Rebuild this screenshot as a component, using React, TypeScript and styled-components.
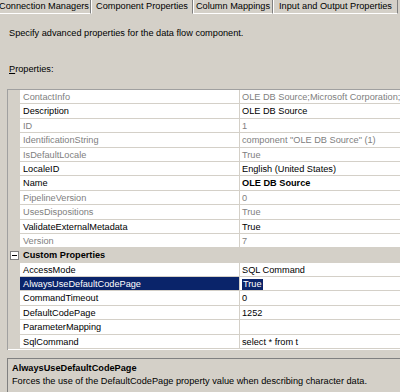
import React from "react";
import styled, { createGlobalStyle } from "styled-components";

interface GridProperty {
  name: string;
  value: string;
  readOnly?: boolean;
  bold?: boolean;
}

const tabs = [
  { label: "Connection Managers", width: 94 },
  { label: "Component Properties", width: 102, active: true },
  { label: "Column Mappings", width: 80 },
  { label: "Input and Output Properties", width: 125 },
];

const commonProperties: GridProperty[] = [
  { name: "ContactInfo", value: "OLE DB Source;Microsoft Corporation;", readOnly: true },
  { name: "Description", value: "OLE DB Source" },
  { name: "ID", value: "1", readOnly: true },
  { name: "IdentificationString", value: 'component "OLE DB Source" (1)', readOnly: true },
  { name: "IsDefaultLocale", value: "True", readOnly: true },
  { name: "LocaleID", value: "English (United States)" },
  { name: "Name", value: "OLE DB Source", bold: true },
  { name: "PipelineVersion", value: "0", readOnly: true },
  { name: "UsesDispositions", value: "True", readOnly: true },
  { name: "ValidateExternalMetadata", value: "True" },
  { name: "Version", value: "7", readOnly: true },
];

const customProperties: GridProperty[] = [
  { name: "AccessMode", value: "SQL Command" },
  { name: "AlwaysUseDefaultCodePage", value: "True" },
  { name: "CommandTimeout", value: "0" },
  { name: "DefaultCodePage", value: "1252" },
  { name: "ParameterMapping", value: "" },
  { name: "SqlCommand", value: "select * from t" },
];

const selectedName = "AlwaysUseDefaultCodePage";

const GlobalStyle = createGlobalStyle`
  body {
    margin: 0;
    background: #d4d0c8;
    font-family: "Liberation Sans", Arial, sans-serif;
    font-size: 9.2px;
    color: #000;
  }
`;

const PropertyRow: React.FC<{ prop: GridProperty }> = ({ prop }) => {
  const selected = prop.name === selectedName;
  return (
    <Row>
      <Gutter />
      <NameCell $muted={prop.readOnly} $selected={selected}>
        {prop.name}
      </NameCell>
      <ValueCell $muted={prop.readOnly} $bold={prop.bold}>
        {selected ? <Highlight>{prop.value}</Highlight> : prop.value}
      </ValueCell>
    </Row>
  );
};

export default function App() {
  return (
    <>
      <GlobalStyle />
      <Page>
        <TabStrip>
          {tabs.map((tab) => (
            <Tab key={tab.label} $width={tab.width} $active={tab.active}>
              {tab.label}
            </Tab>
          ))}
        </TabStrip>

        <Intro>Specify advanced properties for the data flow component.</Intro>
        <Label>
          <u>P</u>roperties:
        </Label>

        <Grid>
          {commonProperties.map((p) => (
            <PropertyRow key={p.name} prop={p} />
          ))}
          <CategoryRow>
            <CategoryGutter>
              <Toggle />
            </CategoryGutter>
            <CategoryTitle>Custom Properties</CategoryTitle>
          </CategoryRow>
          {customProperties.map((p) => (
            <PropertyRow key={p.name} prop={p} />
          ))}
        </Grid>

        <HelpPanel>
          <HelpTitle>AlwaysUseDefaultCodePage</HelpTitle>
          <HelpText>
            Forces the use of the DefaultCodePage property value when describing character data.
          </HelpText>
        </HelpPanel>
      </Page>
    </>
  );
}

const Page = styled.div`
  width: 400px;
  height: 392px;
  overflow: hidden;
  background: #d4d0c8;
`;

const TabStrip = styled.div`
  display: flex;
  margin: -1px 0 0 -3px;
`;

const Tab = styled.div<{ $width: number; $active?: boolean }>`
  flex: none;
  width: ${(p) => p.$width}px;
  height: 15px;
  box-sizing: border-box;
  line-height: 13px;
  text-align: center;
  white-space: nowrap;
  border-top: 1px solid #fff;
  border-left: 1px solid #fff;
  border-right: 1px solid #808080;
  border-bottom: 1px solid ${(p) => (p.$active ? "#d4d0c8" : "#fff")};
`;

const Intro = styled.div`
  margin-top: 13px;
  padding-left: 9px;
  line-height: 12px;
  white-space: nowrap;
`;

const Label = styled.div`
  margin-top: 24px;
  padding-left: 9px;
  line-height: 12px;
`;

const Grid = styled.div`
  margin: 14px 0 0 7px;
  width: 420px;
  background: #fff;
  border-top: 1px solid #a0a0a0;
  border-left: 1px solid #a0a0a0;
  padding-bottom: 1px;
`;

const Row = styled.div`
  display: flex;
  height: 14.4px;
  line-height: 14px;
  white-space: nowrap;
`;

const Gutter = styled.div`
  flex: none;
  width: 12px;
  background: #d4d0c8;
`;

const NameCell = styled.div<{ $muted?: boolean; $selected?: boolean }>`
  flex: none;
  width: 220px;
  box-sizing: border-box;
  padding-left: 3px;
  border-bottom: 1px solid #d4d0c8;
  border-right: 1px solid #d4d0c8;
  background: ${(p) => (p.$selected ? "#0a246a" : "#fff")};
  color: ${(p) => (p.$selected ? "#fff" : p.$muted ? "#808080" : "#000")};
`;

const ValueCell = styled.div<{ $muted?: boolean; $bold?: boolean }>`
  flex: 1;
  padding-left: 2px;
  border-bottom: 1px solid #d4d0c8;
  overflow: hidden;
  color: ${(p) => (p.$muted ? "#808080" : "#000")};
  font-weight: ${(p) => (p.$bold ? "bold" : "normal")};
`;

const Highlight = styled.span`
  display: inline-block;
  line-height: 11px;
  padding: 0 1px;
  background: #0a246a;
  color: #fff;
`;

const CategoryRow = styled.div`
  display: flex;
  height: 14.4px;
  line-height: 14px;
  background: #d4d0c8;
`;

const CategoryGutter = styled.div`
  flex: none;
  width: 12px;
  display: flex;
  align-items: center;
  justify-content: center;
`;

const Toggle = styled.div`
  position: relative;
  width: 9px;
  height: 9px;
  box-sizing: border-box;
  border: 1px solid #808080;
  background: #fff;

  &::after {
    content: "";
    position: absolute;
    left: 1px;
    top: 3px;
    width: 5px;
    height: 1px;
    background: #000;
  }
`;

const CategoryTitle = styled.div`
  padding-left: 3px;
  font-weight: bold;
`;

const HelpPanel = styled.div`
  margin: 8px 0 0 7px;
  height: 40px;
  padding: 3px 0 0 4px;
  border-top: 1px solid #808080;
  border-left: 1px solid #808080;
  line-height: 13px;
  white-space: nowrap;
`;

const HelpTitle = styled.div`
  font-weight: bold;
`;

const HelpText = styled.div``;
